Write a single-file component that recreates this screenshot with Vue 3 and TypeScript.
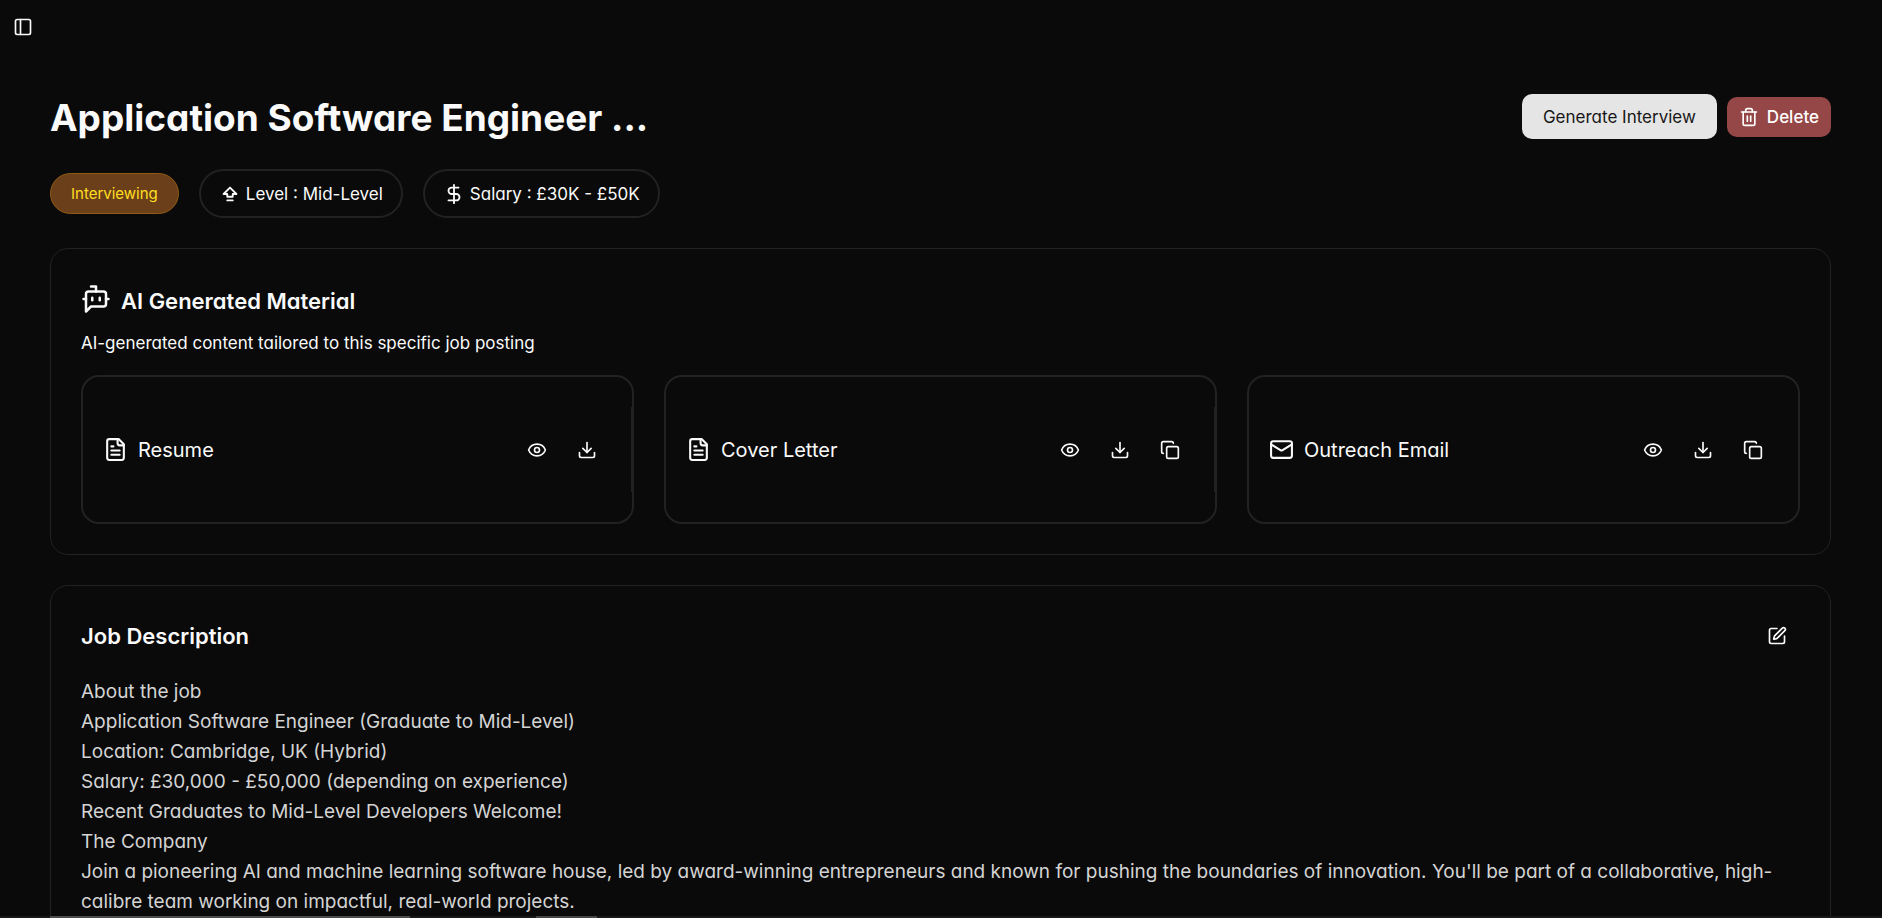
<script setup lang="ts">
type IconName = 'file' | 'mail' | 'eye' | 'download' | 'copy'

interface Material {
  title: string
  icon: IconName
  actions: { icon: IconName; label: string }[]
}

const icons: Record<IconName, string[]> = {
  file: [
    'M15 2H6a2 2 0 0 0-2 2v16a2 2 0 0 0 2 2h12a2 2 0 0 0 2-2V7Z',
    'M14 2v4a2 2 0 0 0 2 2h4',
    'M10 9H8',
    'M16 13H8',
    'M16 17H8',
  ],
  mail: [
    'M4 4h16a2 2 0 0 1 2 2v12a2 2 0 0 1-2 2H4a2 2 0 0 1-2-2V6a2 2 0 0 1 2-2Z',
    'm22 7-8.97 5.7a1.94 1.94 0 0 1-2.06 0L2 7',
  ],
  eye: [
    'M2.062 12.348a1 1 0 0 1 0-.696 10.75 10.75 0 0 1 19.876 0 1 1 0 0 1 0 .696 10.75 10.75 0 0 1-19.876 0',
    'M12 9a3 3 0 1 0 0 6a3 3 0 1 0 0-6',
  ],
  download: ['M21 15v4a2 2 0 0 1-2 2H5a2 2 0 0 1-2-2v-4', 'm7 10 5 5 5-5', 'M12 15V3'],
  copy: [
    'M10 8h10a2 2 0 0 1 2 2v10a2 2 0 0 1-2 2H10a2 2 0 0 1-2-2V10a2 2 0 0 1 2-2Z',
    'M4 16c-1.1 0-2-.9-2-2V4c0-1.1.9-2 2-2h10c1.1 0 2 .9 2 2',
  ],
}

const view = { icon: 'eye' as const, label: 'View' }
const download = { icon: 'download' as const, label: 'Download' }
const copy = { icon: 'copy' as const, label: 'Copy' }

const materials: Material[] = [
  { title: 'Resume', icon: 'file', actions: [view, download] },
  { title: 'Cover Letter', icon: 'file', actions: [view, download, copy] },
  { title: 'Outreach Email', icon: 'mail', actions: [view, download, copy] },
]

const description: string[] = [
  'About the job',
  'Application Software Engineer (Graduate to Mid-Level)',
  'Location: Cambridge, UK (Hybrid)',
  'Salary: £30,000 - £50,000 (depending on experience)',
  'Recent Graduates to Mid-Level Developers Welcome!',
  'The Company',
  "Join a pioneering AI and machine learning software house, led by award-winning entrepreneurs and known for pushing the boundaries of innovation. You'll be part of a collaborative, high-calibre team working on impactful, real-world projects.",
]
</script>

<template>
  <div class="page">
    <header class="topbar">
      <button class="icon-button" type="button" aria-label="Toggle sidebar">
        <svg class="icon small" viewBox="0 0 24 24"><rect x="3" y="3" width="18" height="18" rx="2" /><path d="M9 3v18" /></svg>
      </button>
    </header>

    <main class="content">
      <div class="heading">
        <h1>Application Software Engineer ...</h1>
        <div class="heading-actions">
          <button class="generate" type="button">Generate Interview</button>
          <button class="delete" type="button">
            <svg class="icon small" viewBox="0 0 24 24"><path d="M3 6h18" /><path d="M19 6v14a2 2 0 0 1-2 2H7a2 2 0 0 1-2-2V6" /><path d="M8 6V4a2 2 0 0 1 2-2h4a2 2 0 0 1 2 2v2" /><path d="M10 11v6" /><path d="M14 11v6" /></svg>
            Delete
          </button>
        </div>
      </div>

      <div class="badges">
        <span class="status">Interviewing</span>
        <span class="badge">
          <svg class="icon" viewBox="0 0 24 24"><path d="M9 19h6" /><path d="M9 15v-3H5l7-7 7 7h-4v3H9z" /></svg>
          Level : Mid-Level
        </span>
        <span class="badge">
          <svg class="icon" viewBox="0 0 24 24"><path d="M12 2v20" /><path d="M17 5H9.500a3.500 3.500 0 0 0 0 7h5a3.500 3.500 0 0 1 0 7H6" /></svg>
          Salary : £30K - £50K
        </span>
      </div>

      <section class="card">
        <h2 class="with-icon">
          <svg class="icon large" viewBox="0 0 24 24"><path d="M12 6V2H8" /><path d="m8 18-4 4V8a2 2 0 0 1 2-2h12a2 2 0 0 1 2 2v8a2 2 0 0 1-2 2Z" /><path d="M2 12h2" /><path d="M9 11v2" /><path d="M15 11v2" /><path d="M20 12h2" /></svg>
          <span>AI Generated Material</span>
        </h2>
        <p class="subtitle">AI-generated content tailored to this specific job posting</p>
        <div class="materials">
          <article v-for="item in materials" :key="item.title" class="material">
            <svg class="icon medium" viewBox="0 0 24 24"><path v-for="d in icons[item.icon]" :key="d" :d="d" /></svg>
            <h3>{{ item.title }}</h3>
            <div class="actions">
              <button v-for="action in item.actions" :key="action.label" class="icon-button" type="button" :aria-label="`${action.label} ${item.title}`">
                <svg class="icon small" viewBox="0 0 24 24"><path v-for="d in icons[action.icon]" :key="d" :d="d" /></svg>
              </button>
            </div>
          </article>
        </div>
      </section>

      <section class="card">
        <div class="card-heading">
          <h2>Job Description</h2>
          <button class="icon-button" type="button" aria-label="Edit job description">
            <svg class="icon small" viewBox="0 0 24 24"><path d="M12 3H5a2 2 0 0 0-2 2v14a2 2 0 0 0 2 2h14a2 2 0 0 0 2-2v-7" /><path d="M18.375 2.625a1 1 0 0 1 3 3l-9.013 9.014a2 2 0 0 1-.853.505l-2.873.84a.5.5 0 0 1-.62-.62l.84-2.873a2 2 0 0 1 .506-.852z" /></svg>
          </button>
        </div>
        <div class="description">
          <p v-for="line in description" :key="line">{{ line }}</p>
        </div>
      </section>
    </main>

    <div class="edge" aria-hidden="true">
      <span class="edge-long"></span>
      <span class="edge-short"></span>
    </div>
  </div>
</template>

<style>
body {
  margin: 0;
  background: #0a0a0a;
}
</style>

<style scoped>
.page {
  position: relative;
  height: 100vh;
  overflow: hidden;
  background: #0a0a0a;
  color: #fafafa;
  font-family: Inter, "Open Sans", sans-serif;
  font-feature-settings: "cv11" 1;
  font-size: 17px;
  line-height: 24px;
}

h1,
h2,
h3,
p {
  margin: 0;
}

button {
  border: 0;
  font: inherit;
  font-feature-settings: inherit;
  color: inherit;
  cursor: pointer;
}

.icon {
  flex: none;
  width: 22px;
  height: 22px;
  fill: none;
  stroke: currentColor;
  stroke-width: 2;
  stroke-linecap: round;
  stroke-linejoin: round;
}

.small {
  width: 20px;
  height: 20px;
}

.medium {
  width: 25px;
  height: 25px;
}

.large {
  width: 30px;
  height: 30px;
}

.icon-button {
  display: flex;
  align-items: center;
  justify-content: center;
  width: 46px;
  height: 46px;
  padding: 0;
  background: transparent;
}

.topbar {
  display: flex;
  padding-top: 4px;
  height: 50px;
}

.content {
  display: flex;
  flex-direction: column;
  gap: 30px;
  padding: 40px 51px 40px 50px;
}

.heading {
  display: flex;
  align-items: center;
  justify-content: space-between;
  height: 45px;
}

h1 {
  padding-top: 2px;
  font-size: 37px;
  line-height: 45px;
  font-weight: 700;
}

.heading-actions {
  display: flex;
  align-items: center;
  gap: 10px;
}

.generate {
  padding: 0 21px;
  height: 45px;
  border-radius: 10px;
  background: #e5e5e5;
  color: #171717;
}

.delete {
  display: flex;
  align-items: center;
  gap: 8px;
  padding: 0 12px;
  height: 40px;
  border-radius: 10px;
  background: #954646;
  color: #fff;
  font-weight: 500;
}

.badges {
  display: flex;
  align-items: center;
  gap: 20px;
}

.status {
  padding: 8px 20px;
  border: 1px solid #8f5b17;
  border-radius: 24px;
  background: #6b3f1a;
  color: #ffdf20;
  font-size: 15px;
  line-height: 23px;
}

.badge {
  display: flex;
  align-items: center;
  gap: 5px;
  height: 45px;
  padding: 0 18px;
  border: 2px solid #222;
  border-radius: 25px;
}

.card {
  padding: 30px;
  border: 1px solid #222;
  border-radius: 18px;
}

h2 {
  font-size: 22px;
  line-height: 34px;
  font-weight: 600;
}

.with-icon {
  display: flex;
  align-items: flex-start;
  gap: 10px;
  margin-top: 5px;
}

.subtitle {
  margin: 13px 0 20px;
}

.materials {
  display: grid;
  grid-template-columns: repeat(3, 1fr);
  gap: 30px;
}

.material {
  position: relative;
  display: flex;
  align-items: center;
  gap: 10px;
  height: 145px;
  padding: 0 22px 0 20px;
  border: 2px solid #222;
  border-radius: 18px;
}

.material:not(:last-child)::after {
  content: "";
  position: absolute;
  top: 30px;
  right: 0;
  bottom: 30px;
  width: 1px;
  background: #222;
}

h3 {
  flex: 1;
  font-size: 20px;
  font-weight: 400;
}

.actions {
  display: flex;
  gap: 4px;
}

.card-heading {
  display: flex;
  align-items: center;
  justify-content: space-between;
  height: 40px;
}

.description {
  margin-top: 21px;
  color: #d4d4d4;
  font-size: 19px;
  line-height: 30px;
}

.edge {
  position: absolute;
  right: 0;
  bottom: 0;
  left: 0;
  display: flex;
  gap: 126px;
  height: 2px;
  padding-left: 50px;
  background: #1b1819;
}

.edge-long {
  width: 360px;
  background: #4c4c4c;
}

.edge-short {
  width: 61px;
  background: #454545;
}
</style>
